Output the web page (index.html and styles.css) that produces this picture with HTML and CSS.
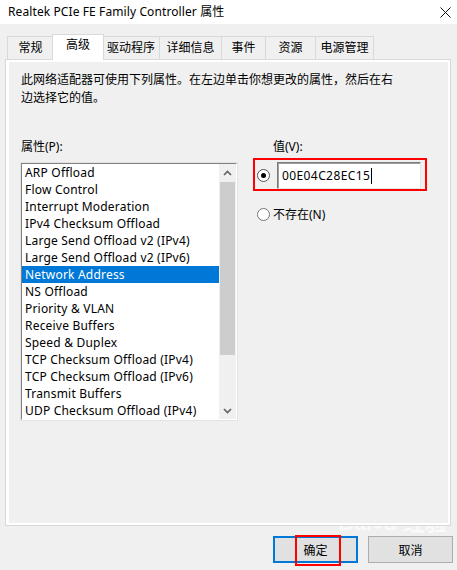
FILE: index.html
```html
<!DOCTYPE html>
<html lang="zh-CN">
<head>
<meta charset="utf-8">
<title>Realtek PCIe FE Family Controller 属性</title>
<link rel="stylesheet" href="styles.css">
</head>
<body>
<div class="window">
  <div class="titlebar">
    <span class="title">Realtek PCIe FE Family Controller 属性</span>
    <svg class="close" width="11" height="11" viewBox="0 0 11 11"><path d="M0.5 0.5 L10.5 10.5 M10.5 0.5 L0.5 10.5" stroke="#111" stroke-width="1" fill="none"/></svg>
  </div>
  <div class="tabs">
    <div class="tab w1">常规</div>
    <div class="tab active w2">高级</div>
    <div class="tab w3">驱动程序</div>
    <div class="tab w4">详细信息</div>
    <div class="tab w5">事件</div>
    <div class="tab w6">资源</div>
    <div class="tab w7">电源管理</div>
  </div>
  <div class="panel">
    <div class="page">
      <p class="desc">此网络适配器可使用下列属性。在左边单击你想更改的属性，然后在右<br>边选择它的值。</p>
      <div class="cols">
        <div class="left">
          <div class="label">属性(P):</div>
          <div class="listbox">
            <ul class="items">
              <li>ARP Offload</li>
              <li>Flow Control</li>
              <li>Interrupt Moderation</li>
              <li>IPv4 Checksum Offload</li>
              <li>Large Send Offload v2 (IPv4)</li>
              <li>Large Send Offload v2 (IPv6)</li>
              <li class="selected">Network Address</li>
              <li>NS Offload</li>
              <li>Priority &amp; VLAN</li>
              <li>Receive Buffers</li>
              <li>Speed &amp; Duplex</li>
              <li>TCP Checksum Offload (IPv4)</li>
              <li>TCP Checksum Offload (IPv6)</li>
              <li>Transmit Buffers</li>
              <li>UDP Checksum Offload (IPv4)</li>
            </ul>
            <div class="scrollbar">
              <div class="sb-btn"><svg width="9" height="6" viewBox="0 0 9 6"><path d="M1 5 L4.5 1.5 L8 5" stroke="#606060" stroke-width="1.6" fill="none"/></svg></div>
              <div class="sb-track"><div class="sb-thumb"></div></div>
              <div class="sb-btn"><svg width="9" height="6" viewBox="0 0 9 6"><path d="M1 1 L4.5 4.5 L8 1" stroke="#606060" stroke-width="1.6" fill="none"/></svg></div>
            </div>
          </div>
        </div>
        <div class="right">
          <div class="label value-label">值(V):</div>
          <div class="value-row">
            <span class="radio checked"></span>
            <div class="input"><span class="input-text">00E04C28EC15</span><span class="caret"></span></div>
          </div>
          <div class="radio-row">
            <span class="radio"></span>
            <span class="radio-label">不存在(N)</span>
          </div>
        </div>
      </div>
    </div>
  </div>
  <div class="buttons">
    <div class="btn default">确定<span class="annot"></span></div>
    <div class="btn">取消</div>
  </div>
  <div class="watermark">Bai<span class="wm-paw">&#9679;</span>u 经验</div>
</div>
</body>
</html>
```

FILE: styles.css
```css
* { box-sizing: border-box; }
html, body {
  margin: 0;
  padding: 0;
  background: #f0f0f0;
}
body {
  font-family: "Noto Sans", "Noto Sans CJK SC", sans-serif;
  font-size: 12px;
  color: #000;
}
.window {
  position: relative;
  width: 457px;
  height: 570px;
  overflow: hidden;
  background: #f0f0f0;
}
.titlebar {
  height: 24px;
  background: #fff;
  display: flex;
  align-items: center;
  justify-content: space-between;
  padding: 0 6px 0 8px;
}
.title {
  font-size: 12px;
  letter-spacing: 0.1px;
  line-height: 24px;
}
.close { display: block; }

.tabs {
  margin-top: 10px;
  height: 25px;
  padding-left: 7px;
  display: flex;
  align-items: flex-end;
  position: relative;
  z-index: 2;
}
.tab {
  height: 23px;
  border: 1px solid #d9d9d9;
  border-bottom: none;
  margin-left: -1px;
  background: #f0f0f0;
  display: flex;
  align-items: center;
  justify-content: center;
  line-height: 1;
  padding-bottom: 1px;
}
.tab:first-child { margin-left: 0; }
.tab.active {
  height: 26px;
  margin-bottom: -1px;
  margin-left: -2px;
  margin-right: -1px;
  background: #fff;
  position: relative;
  padding-bottom: 5px;
}
.w1 { width: 47px; }
.w2 { width: 52px; }
.w3 { width: 58px; }
.w4 { width: 63px; }
.w5 { width: 45px; }
.w6 { width: 51px; }
.w7 { width: 59px; }

.panel {
  margin-left: 5px;
  width: 446px;
  height: 467px;
  border: 1px solid #d9d9d9;
  background: #fff;
  padding: 2px 2px 2px 3px;
  position: relative;
  z-index: 1;
}
.page {
  height: 461px;
  background: #f0f0f0;
  padding-left: 12px;
  padding-top: 9px;
}
.desc {
  margin: 0;
  line-height: 18px;
}
.cols {
  display: flex;
  margin-top: 31px;
}
.left { width: 216px; }
.label { line-height: 18px; height: 18px; }
.listbox {
  margin-top: 7px;
  width: 216px;
  height: 257px;
  background: #fff;
  border-top: 1px solid #828282;
  border-left: 1px solid #828282;
  border-right: 1px solid #fff;
  border-bottom: 1px solid #fff;
  outline: 1px solid #e3e3e3;
  outline-offset: 0;
  display: flex;
}
.items {
  list-style: none;
  margin: 0;
  padding: 0;
  width: 197px;
}
.items li {
  height: 17px;
  line-height: 17px;
  padding-left: 3px;
  white-space: nowrap;
  letter-spacing: 0.2px;
}
.items li.selected {
  background: #0078d7;
  color: #fff;
}
.scrollbar {
  width: 17px;
  background: #f0f0f0;
  display: flex;
  flex-direction: column;
}
.sb-btn {
  height: 17px;
  display: flex;
  align-items: center;
  justify-content: center;
}
.sb-track {
  flex: 1;
  padding: 1px 1px 0 1px;
}
.sb-thumb {
  height: 173px;
  background: #cdcdcd;
}

.right {
  margin-left: 16px;
  width: 174px;
}
.value-label { padding-left: 20px; }
.value-row {
  margin-top: 2px;
  height: 33px;
  border: 2px solid #ff0000;
  display: flex;
  align-items: flex-start;
}
.radio {
  width: 13px;
  height: 13px;
  border-radius: 50%;
  border: 1px solid #555;
  background: #fff;
  display: inline-block;
  position: relative;
  flex: none;
}
.radio.checked::after {
  content: "";
  position: absolute;
  left: 3px;
  top: 3px;
  width: 5px;
  height: 5px;
  border-radius: 50%;
  background: #000;
}
.value-row .radio {
  margin-left: 2px;
  margin-top: 9px;
}
.input {
  margin-left: 7px;
  margin-top: 2px;
  width: 144px;
  height: 27px;
  background: #fff;
  border-top: 1px solid #7a7a7a;
  border-left: 1px solid #7a7a7a;
  border-right: 1px solid #e3e3e3;
  border-bottom: 1px solid #e3e3e3;
  box-shadow: inset 1px 1px 0 #a0a0a0;
  display: flex;
  align-items: center;
  padding-left: 4px;
}
.input-text { letter-spacing: 0.4px; }
.caret {
  display: inline-block;
  width: 1px;
  height: 16px;
  background: #000;
  margin-left: 1px;
}
.radio-row {
  margin-top: 14px;
  display: flex;
  align-items: center;
  height: 18px;
}
.radio-row .radio {
  margin-left: 4px;
  border-color: #777;
}
.radio-label { margin-left: 3px; }

.buttons {
  display: flex;
  justify-content: flex-end;
  gap: 10px;
  margin-top: 10px;
  padding-right: 4px;
}
.btn {
  width: 85px;
  height: 27px;
  background: #e1e1e1;
  border: 1px solid #adadad;
  display: flex;
  align-items: center;
  justify-content: center;
  position: relative;
}
.btn.default {
  border: 2px solid #0078d7;
}
.annot {
  position: absolute;
  left: 20px;
  top: -3px;
  width: 46px;
  height: 31px;
  border: 2px solid #ff0000;
}
.watermark {
  position: absolute;
  left: 338px;
  top: 511px;
  font-family: "Liberation Sans", "Noto Sans CJK SC", sans-serif;
  font-size: 22px;
  font-weight: bold;
  line-height: 24px;
  color: rgba(255, 255, 255, 0.7);
  pointer-events: none;
}
.wm-paw { font-size: 18px; }
```
